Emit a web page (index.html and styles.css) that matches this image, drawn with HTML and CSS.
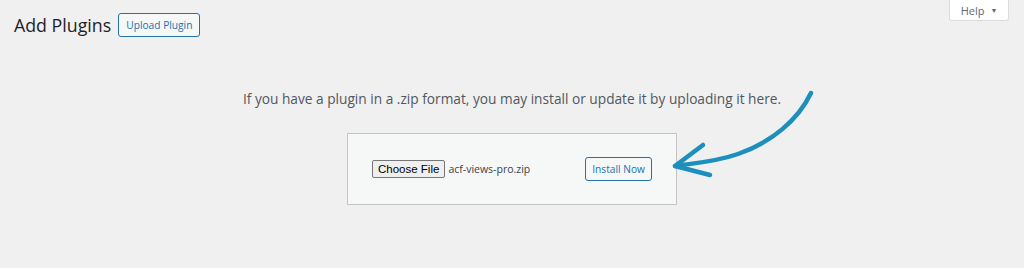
FILE: index.html
```html
<!DOCTYPE html>
<html lang="en">
<head>
    <meta charset="UTF-8">
    <meta name="viewport" content="width=device-width, initial-scale=1.0">
    <title>Add Plugins</title>
    <link rel="stylesheet" href="styles.css">
</head>
<body>
    <div class="topbar">
        <div class="page-header">
            <h1>Add Plugins</h1>
            <button class="btn">Upload Plugin</button>
        </div>
        <div class="help-tab">Help <span class="caret">&#9660;</span></div>
    </div>

    <div class="upload-section">
        <p class="install-help">If you have a plugin in a .zip format, you may install or update it by uploading it here.</p>
        <form class="upload-box">
            <span class="file-picker">
                <span class="choose-file">Choose File</span>
                <span class="file-name">acf-views-pro.zip</span>
            </span>
            <button type="button" class="btn">Install Now</button>
        </form>
    </div>

    <!-- hand drawn arrow pointing at the install button -->
    <svg class="arrow" width="160" height="110" viewBox="0 0 160 110">
        <path d="M151 13 C 138 40, 112 62, 78 74 C 55 82, 35 83, 15 86" />
        <path d="M43 65 L 15 86 L 50 95" />
    </svg>
</body>
</html>
```

FILE: styles.css
```css
body {
    margin: 0;
    background-color: #f0f0f1;
    font-family: "Open Sans", sans-serif;
    color: #3c434a;
    position: relative;
    height: 268px;
    overflow: hidden;
}

.topbar {
    display: flex;
    justify-content: space-between;
    align-items: flex-start;
    padding-left: 14px;
    padding-right: 15px;
}

.page-header {
    display: flex;
    align-items: center;
    gap: 7px;
    padding-top: 13px;
}

h1 {
    margin: 0;
    font-size: 17.8px;
    font-weight: 400;
    color: #1d2327;
    line-height: 24px;
}

.btn {
    font-family: "Open Sans", sans-serif;
    font-size: 10.2px;
    color: #2271b1;
    background-color: #f6f7f7;
    border: 1px solid #2271b1;
    border-radius: 3px;
    height: 24px;
    padding: 0 7px;
    cursor: pointer;
}

.help-tab {
    background-color: #fff;
    border: 1px solid #dcdcde;
    border-top: none;
    border-radius: 0 0 3px 3px;
    width: 58px;
    height: 20px;
    box-sizing: content-box;
    display: flex;
    justify-content: center;
    align-items: center;
    gap: 6px;
    font-size: 11px;
    color: #646970;
}

.caret {
    font-size: 7px;
}

.upload-section {
    display: flex;
    flex-direction: column;
    align-items: center;
    padding-top: 53px;
}

.install-help {
    margin: 0;
    font-size: 13.7px;
    line-height: 18px;
    color: #50575e;
}

.upload-box {
    margin-top: 25px;
    width: 330px;
    height: 72px;
    box-sizing: border-box;
    background-color: #f6f7f7;
    border: 1px solid #c3c4c7;
    display: flex;
    align-items: center;
    justify-content: space-between;
    padding: 0 24px 0 24px;
}

.file-picker {
    display: flex;
    align-items: center;
    gap: 3px;
}

.choose-file {
    font-family: "Liberation Sans", sans-serif;
    font-size: 11.5px;
    color: #000;
    background-color: #efefef;
    border: 1px solid #767676;
    border-radius: 2px;
    padding: 1px 5px;
    line-height: 14px;
}

.file-name {
    font-size: 10.5px;
    color: #3c434a;
}

.upload-box .btn {
    padding: 0 6px;
}

.arrow {
    position: absolute;
    left: 660px;
    top: 80px;
}

.arrow path {
    fill: none;
    stroke: #1c8fbc;
    stroke-width: 4.5;
    stroke-linecap: round;
    stroke-linejoin: round;
}
```
